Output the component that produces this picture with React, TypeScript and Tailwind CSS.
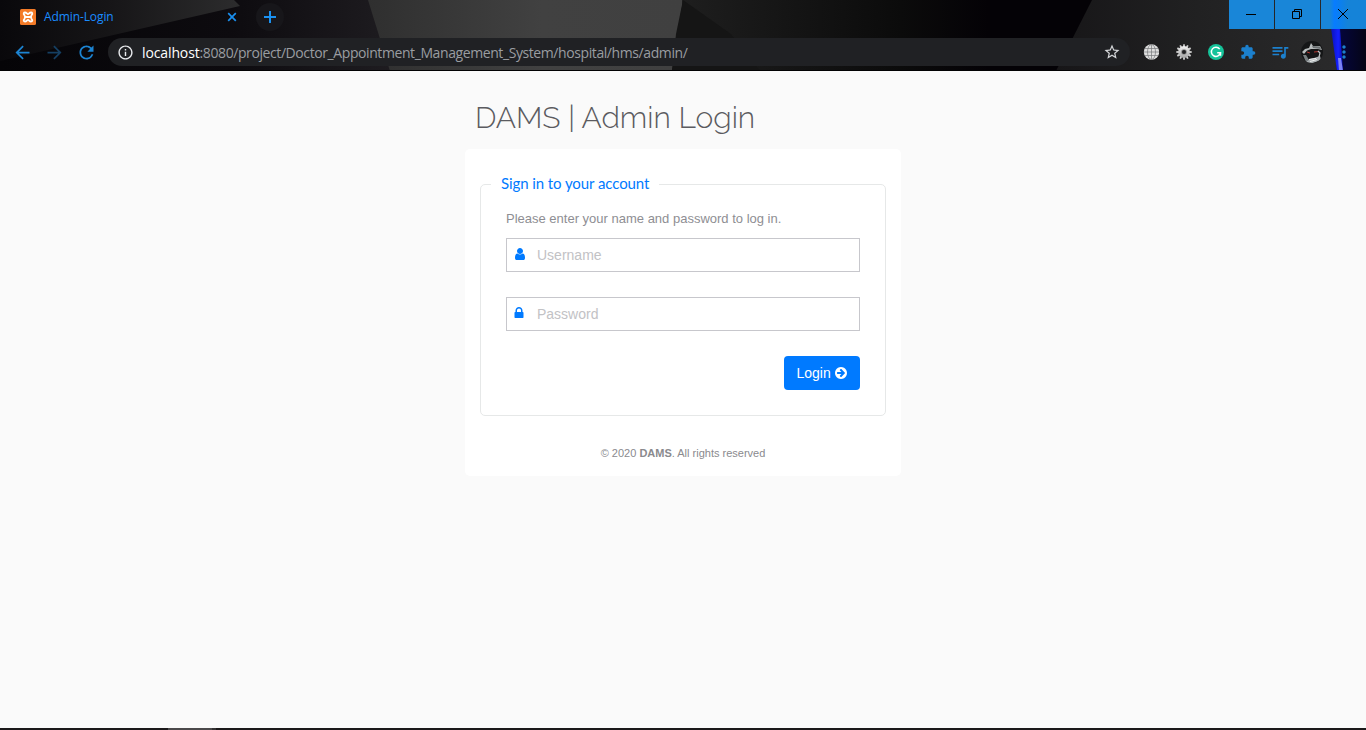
import React from "react";
import {
  MdArrowBack,
  MdArrowForward,
  MdRefresh,
  MdInfoOutline,
  MdStarBorder,
  MdExtension,
  MdQueueMusic,
  MdMoreVert,
} from "react-icons/md";

function ThemeArt() {
  return (
    <svg className="absolute inset-0" width="1366" height="71" viewBox="0 0 1366 71" preserveAspectRatio="none" aria-hidden="true">
      <defs>
        <linearGradient id="left" x1="0" x2="1">
          <stop offset="0" stopColor="#09080b" />
          <stop offset="0.45" stopColor="#161517" />
          <stop offset="1" stopColor="#2c2c2d" />
        </linearGradient>
        <linearGradient id="shade" x1="0" x2="1">
          <stop offset="0" stopColor="#050407" />
          <stop offset="0.55" stopColor="#0d0b0f" />
          <stop offset="1" stopColor="#211f23" />
        </linearGradient>
        <linearGradient id="mid" x1="0" x2="1">
          <stop offset="0" stopColor="#2f2f2f" />
          <stop offset="0.55" stopColor="#414141" />
          <stop offset="1" stopColor="#404040" />
        </linearGradient>
        <linearGradient id="dark" x1="0" x2="1">
          <stop offset="0" stopColor="#1e1e1e" />
          <stop offset="0.5" stopColor="#0b0b0b" />
          <stop offset="0.7" stopColor="#040206" />
          <stop offset="1" stopColor="#040206" />
        </linearGradient>
        <linearGradient id="right" x1="0" x2="1">
          <stop offset="0" stopColor="#171618" />
          <stop offset="0.5" stopColor="#212122" />
          <stop offset="1" stopColor="#2a2a2b" />
        </linearGradient>
        <linearGradient id="navy" x1="0" x2="1">
          <stop offset="0" stopColor="#05064a" />
          <stop offset="1" stopColor="#050516" />
        </linearGradient>
        <linearGradient id="beam" x1="0" x2="1">
          <stop offset="0" stopColor="#0a12b8" />
          <stop offset="0.6" stopColor="#1420ff" />
          <stop offset="1" stopColor="#0810b0" />
        </linearGradient>
      </defs>
      <rect width="1366" height="71" fill="url(#dark)" />
      <rect width="420" height="71" fill="url(#shade)" />
      <path d="M0 0H234L240 6L0 61Z" fill="url(#left)" />
      <path d="M368 0H683L672 71H390Z" fill="url(#mid)" />
      <rect x="682" width="438" height="71" fill="url(#dark)" />
      <path d="M683 0L676 34L672 71H760L731 34Z" fill="#151515" />
      <path d="M1092 0H1340V71H1056Z" fill="url(#right)" />
      <path d="M1330 0H1366V71H1337Z" fill="url(#navy)" />
      <path d="M1331 28H1340L1343 71H1337Z" fill="url(#beam)" />
      <path d="M1338 58H1341L1343 71H1339Z" fill="#7c82f5" />
      <rect y="70" width="1366" height="1" fill="#020203" />
    </svg>
  );
}

function Favicon() {
  return (
    <svg width="16" height="16" viewBox="0 0 16 16" aria-hidden="true">
      <rect width="16" height="16" rx="1.500" fill="#f47b28" />
      <path
        d="M8 8C6.600 8 5.600 8 5 8M11 8H8M4.500 6.200C3 4.600 3.800 3.500 5 3.500c1.600 0 2 1.600 3 1.600s1.400-1.600 3-1.600c1.200 0 2 1.100.5 2.700L10.900 8l.6 1.800c1.500 1.600.7 2.700-.5 2.700-1.600 0-2-1.600-3-1.600s-1.400 1.600-3 1.600c-1.200 0-2-1.100-.5-2.700L5.100 8Z"
        fill="none"
        stroke="#fff"
        strokeWidth="1.800"
        strokeLinejoin="round"
      />
    </svg>
  );
}

function GlobeIcon() {
  return (
    <svg className="-ml-px mr-px" width="16" height="16" viewBox="0 0 16 16" aria-hidden="true">
      <circle cx="8.500" cy="8" r="7.700" fill="#dedede" />
      <g fill="none" stroke="#77797b" strokeWidth="0.700">
        <path d="M8.500 .5v15M1 8h15M2 4.500h13M2 11.500h13" />
        <ellipse cx="8.500" cy="8" rx="4" ry="7.500" />
      </g>
    </svg>
  );
}

const teeth = [0, 30, 60, 90, 120, 150, 180, 210, 240, 270, 300, 330];

function GearIcon() {
  return (
    <svg width="16" height="16" viewBox="0 0 16 16" aria-hidden="true">
      <defs>
        <linearGradient id="metal" x1="0" x2="0" y1="0" y2="1">
          <stop offset="0" stopColor="#f2f2f2" />
          <stop offset="1" stopColor="#a3a3a3" />
        </linearGradient>
      </defs>
      {teeth.map((a) => (
        <rect key={a} x="7.100" y="0.300" width="1.800" height="3" fill="#d0d0d0" transform={`rotate(${a} 8 8)`} />
      ))}
      <circle cx="8" cy="8" r="5.900" fill="url(#metal)" />
      <circle cx="8" cy="8" r="2.800" fill="#8b8b8b" />
      <circle cx="8" cy="8" r="2" fill="#202022" />
    </svg>
  );
}

function GrammarIcon() {
  return (
    <svg width="16" height="16" viewBox="0 0 16 16" aria-hidden="true">
      <circle cx="8" cy="8" r="8" fill="#15c39a" />
      <path d="M11.700 5.100A4.600 4.600 0 1 0 12.500 8.700H9.200M12.500 8.300v3.400" fill="none" stroke="#fff" strokeWidth="1.500" />
    </svg>
  );
}

function Avatar() {
  return (
    <svg className="shrink-0" width="22" height="22" viewBox="0 0 22 22" aria-hidden="true">
      <defs>
        <clipPath id="face">
          <circle cx="11" cy="11" r="11" />
        </clipPath>
      </defs>
      <g clipPath="url(#face)">
        <rect width="22" height="22" fill="#151617" />
        <path d="M1 11 4 8 8 7 10 2 12 5 19 5 21 9 17 8 10 8 6 9.500 3 13Z" fill="#b8bcbd" />
        <path d="M11 5 19 5.500 20 8 12 7Z" fill="#6d7274" />
        <path d="M4 22 8 18 13 17 19 15 20 19 12 22Z" fill="#a9afb1" />
        <path d="M2 14 5 14 8 19 5 21Z" fill="#777d7f" />
        <path d="M8 18.500 15 17.500M9 20.500 16 18.500" stroke="#eef0f0" strokeWidth="1" />
        <path d="M6 11 9 12M13 11 18 10.500" stroke="#b0352f" strokeWidth="1" />
        <path d="M17 10 19 12 18 16" fill="none" stroke="#bfc2c4" strokeWidth="1.200" />
      </g>
    </svg>
  );
}

function Glyph({ d, className }: { d: string; className?: string }) {
  return (
    <svg width="14" height="14" viewBox="0 0 1792 1792" fill="currentColor" className={className} aria-hidden="true">
      <path d={d} />
    </svg>
  );
}

const USER =
  "M1536 1399q0 109-62.500 187t-150.500 78h-854q-88 0-150.500-78t-62.500-187q0-85 8.500-160.500t31.500-152 58.500-131 94-89 134.500-34.500q131 128 313 128t313-128q76 0 134.500 34.500t94 89 58.500 131 31.500 152 8.500 160.500zm-256-887q0 159-112.500 271.500t-271.500 112.500-271.500-112.500-112.500-271.500 112.500-271.500 271.500-112.500 271.500 112.500 112.500 271.500z";
const LOCK =
  "M640 768h512v-192q0-106-75-181t-181-75-181 75-75 181v192zm832 96v576q0 40-28 68t-68 28h-960q-40 0-68-28t-28-68v-576q0-40 28-68t68-28h32v-192q0-184 132-316t316-132 316 132 132 316v192h32q40 0 68 28t28 68z";
const ARROW =
  "M1413 896q0-27-18-45l-91-91-362-362q-18-18-45-18t-45 18l-91 91q-18 18-18 45t18 45l189 189h-502q-26 0-45 19t-19 45v128q0 26 19 45t45 19h502l-189 189q-19 19-19 45t19 45l91 91q18 18 45 18t45-18l362-362 91-91q18-18 18-45zm251 0q0 209-103 385.500t-279.500 279.500-385.500 103-385.500-103-279.500-279.500-103-385.500 103-385.500 279.500-279.500 385.500-103 385.500 103 279.500 279.500 103 385.500z";

function BrowserChrome() {
  return (
    <header className="relative h-[71px] shrink-0 overflow-hidden bg-black font-['Open_Sans',sans-serif]">
      <ThemeArt />
      <div className="relative flex h-[34px] items-start">
        <div className="flex h-[34px] w-[242px] items-center pl-5">
          <Favicon />
          <span className="ml-2 text-[12px] tracking-[-0.1px] text-[#1a8cff]">Admin-Login</span>
          <svg className="ml-auto mr-[5px]" width="10" height="10" viewBox="0 0 10 10" aria-hidden="true">
            <path d="M1.200 1.200 8.800 8.800M8.800 1.200 1.200 8.800" stroke="#1a90f0" strokeWidth="1.700" />
          </svg>
        </div>
        <div className="ml-[14px] mt-[3px] flex size-7 items-center justify-center rounded-full bg-[#17161a]">
          <svg width="12" height="12" viewBox="0 0 12 12" aria-hidden="true">
            <path d="M6 0v12M0 6h12" stroke="#1a90f0" strokeWidth="2" />
          </svg>
        </div>
        <div className="ml-auto flex h-[29px] gap-px">
          <div className="flex w-[45px] items-center justify-center bg-[#1986d8] pr-[2px]">
            <svg width="10" height="10" viewBox="0 0 10 10" aria-hidden="true">
              <path d="M0 4.500h10" stroke="#000" />
            </svg>
          </div>
          <div className="flex w-[45px] items-center justify-center bg-[#1986d8] pr-[2px]">
            <svg className="-mt-px" width="10" height="10" viewBox="0 0 10 10" fill="none" stroke="#000" aria-hidden="true">
              <path d="M.5 2.500h7v7h-7zM2.500 2.500v-2h7v7h-2" />
            </svg>
          </div>
          <div className="flex w-[45px] items-center justify-center bg-linear-to-r from-[#1986d8] from-20% via-[#087cff] via-30% to-[#1583d8] to-60% pr-[2px]">
            <svg className="-mt-px" width="10" height="10" viewBox="0 0 10 10" aria-hidden="true">
              <path d="M0 0 10 10M10 0 0 10" stroke="#000" />
            </svg>
          </div>
        </div>
      </div>
      <div className="relative flex h-9 items-center">
        <div className="flex w-[108px] shrink-0 items-center gap-[11px] pl-[12px] text-[#1c84d2]">
          <MdArrowBack size={21} />
          <MdArrowForward size={21} className="text-[#153f62]" />
          <MdRefresh size={21} />
        </div>
        <div className="flex h-7 w-[1022px] shrink-0 items-center rounded-full bg-[#202124] pl-[9px] pr-[9px]">
          <MdInfoOutline size={17} className="text-[#e8eaed]" />
          <span className="ml-2 whitespace-nowrap text-[14px] tracking-[-0.41px] text-[#9a9da1]">
            <span className="tracking-[-0.12px] text-white">localhost</span>
            :8080/project/Doctor_Appointment_Management_System/hospital/hms/admin/
          </span>
          <MdStarBorder size={18} className="ml-auto text-[#d5d7da]" />
        </div>
        <div className="ml-[14px] flex shrink-0 items-center gap-4">
          <GlobeIcon />
          <GearIcon />
          <GrammarIcon />
          <MdExtension size={16} className="text-[#1c80cd]" />
          <MdQueueMusic size={20} className="-mx-0.5 text-[#1c80cd]" />
          <span className="-ml-[3px] flex">
            <Avatar />
          </span>
        </div>
        <MdMoreVert size={20} className="ml-[11px] shrink-0 text-[#1c80cd]" />
      </div>
    </header>
  );
}

function Field({ icon, type, placeholder }: { icon: React.ReactNode; type: string; placeholder: string }) {
  return (
    <label className="flex h-[34px] items-center border border-[#c7c7cc] bg-white pl-[6px] text-[#007aff]">
      {icon}
      <input
        type={type}
        placeholder={placeholder}
        className="ml-[10px] min-w-0 flex-1 bg-transparent text-[14px] outline-none placeholder:text-[#c2c2c5]"
      />
    </label>
  );
}

export default function App() {
  return (
    <div className="flex h-[730px] w-[1366px] flex-col overflow-hidden bg-[#fafafa] font-['Liberation_Sans',sans-serif]">
      <BrowserChrome />
      <main className="mx-auto w-[436px] flex-1 pt-[27px]">
        <h2 className="h-[51px] whitespace-nowrap pl-[10px] font-['Raleway','Lato',sans-serif] text-[30px] font-light leading-10 text-[#5b5b60]">
          DAMS | Admin Login
        </h2>
        <section className="h-[327px] rounded-[5px] bg-white px-[15px] pt-[35px]">
          <form className="h-[232px] rounded-[5px] border border-[#e6e8e8] px-[25px]" onSubmit={(e) => e.preventDefault()}>
            <div className="-ml-[15px] -mt-3 flex h-6 w-[168px] items-center bg-white pb-[3px] pl-[10px] font-['Lato',sans-serif] text-[15px] tracking-[-0.08px] text-[#007aff]">
              <span className="whitespace-nowrap">Sign in to your account</span>
            </div>
            <p className="mt-[11px] h-[30px] whitespace-nowrap text-[13px] leading-[22px] text-[#8e8e93]">
              Please enter your name and password to log in.
            </p>
            <div className="flex flex-col gap-[25px]">
              <Field type="text" placeholder="Username" icon={<Glyph d={USER} className="-ml-[0.5px] -mt-[2px] mr-[0.5px]" />} />
              <Field type="password" placeholder="Password" icon={<Glyph d={LOCK} className="-ml-px -mt-[2px] mr-px" />} />
              <button type="submit" className="flex h-[34px] w-[76px] items-center self-end rounded-[4px] bg-[#007aff] pl-[12.5px] text-[14px] text-white">
                Login
                <Glyph d={ARROW} className="ml-[3.5px] shrink-0" />
              </button>
            </div>
          </form>
          <p className="mt-[29px] text-center text-[11px] leading-4 text-[#8a8a8e]">
            © 2020 <b>DAMS</b>. All rights reserved
          </p>
        </section>
      </main>
      <footer className="flex h-0.5 shrink-0 bg-[#1b191a] pl-[168px]">
        <span className="w-11 bg-[#4b494a]" />
        <span className="w-1 bg-[#343233]" />
      </footer>
    </div>
  );
}
